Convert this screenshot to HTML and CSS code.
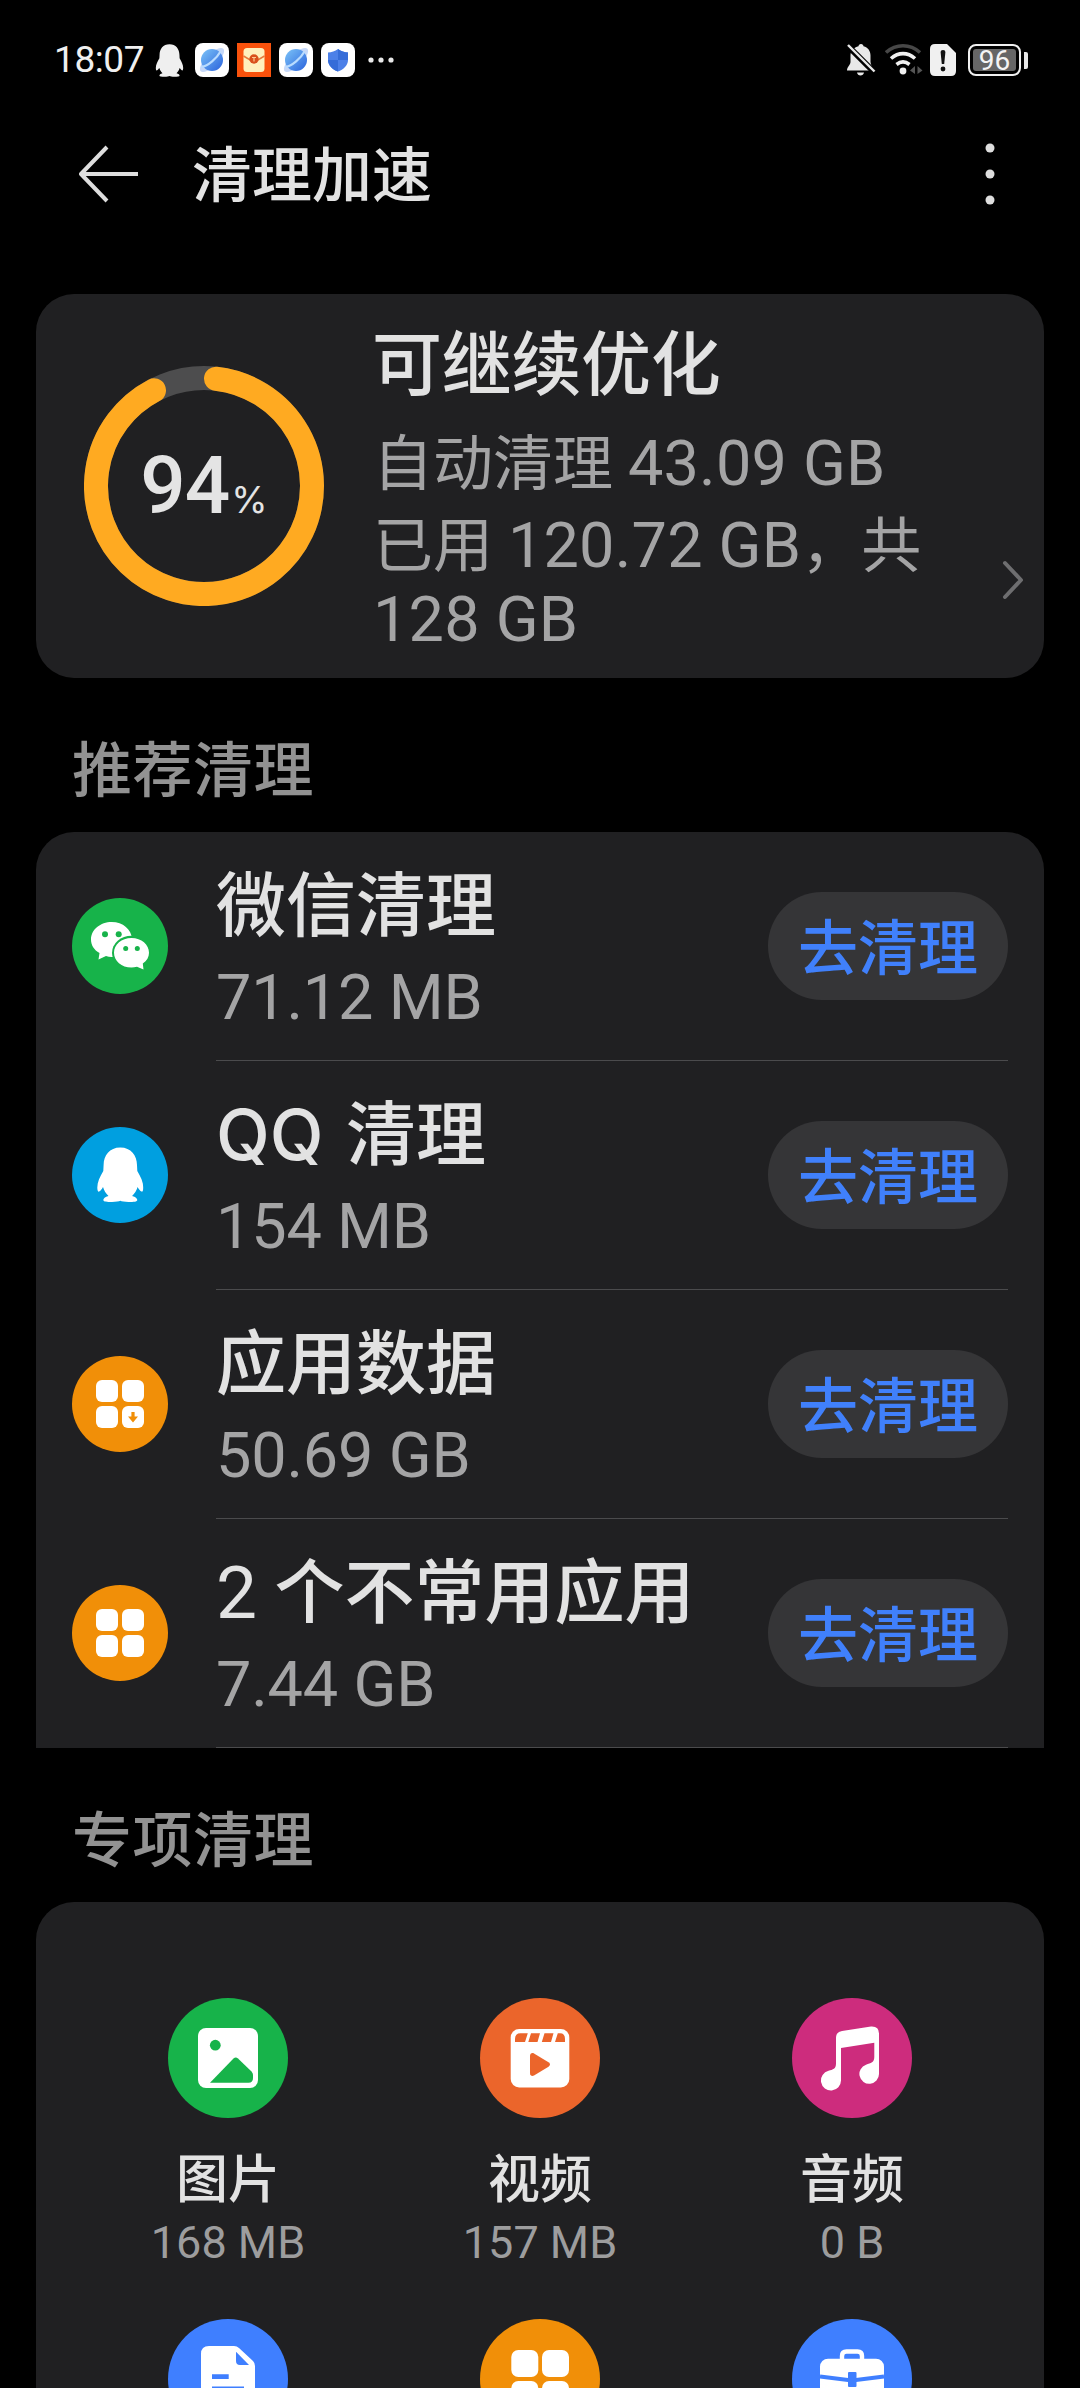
FILE: index.html
```html
<!DOCTYPE html>
<html lang="zh-CN">
<head>
<meta charset="utf-8">
<title>清理加速</title>
<link rel="stylesheet" href="styles.css">
</head>
<body>
<svg class="defs" width="0" height="0">
  <defs>
    <linearGradient id="planet" x1="0" y1="0" x2="1" y2="1"><stop offset="0" stop-color="#7cc4f8"/><stop offset="1" stop-color="#2a62dc"/></linearGradient>
    <symbol id="penguin" viewBox="25 20 46.600 55.500"><path d="M48.300 20.400C37.500 20.400 31.700 28.500 31.600 38L31.300 44C28 49.500 25.300 55 25.300 60.500C25.300 63.500 26 65 27 64.600C28.500 64 30 62 31 60C32 63.500 34 66.500 36.500 69C33 70 31.300 71.500 31.300 73C31.300 74.800 35 75 40 75C44 75 47 74.400 48.300 73.800C49.600 74.400 52.600 75 56.600 75C61.600 75 65.300 74.800 65.300 73C65.300 71.500 63.600 70 60.100 69C62.600 66.500 64.600 63.500 65.600 60C66.600 62 68.100 64 69.600 64.600C70.600 65 71.300 63.500 71.300 60.500C71.300 55 68.600 49.500 65.300 44L65 38C64.900 28.500 59.100 20.400 48.300 20.400Z" fill="currentColor"/></symbol>
    <symbol id="browser" viewBox="0 0 34 34"><rect width="34" height="34" rx="8" fill="#fff"/><ellipse cx="17" cy="17" rx="16" ry="6" transform="rotate(-45 17 17)" fill="#c6d8f8"/><circle cx="17" cy="17" r="11" fill="url(#planet)"/><path d="M6.500 24C13 23 22 15 25.500 8.500" fill="none" stroke="#b9dcff" stroke-width="2.200"/></symbol>
  </defs>
</svg>

<header class="status">
  <div class="status-left">
    <span class="clock">18:07</span>
    <svg class="st-qq" width="29" height="33"><use href="#penguin"/></svg>
    <svg class="st-app" width="34" height="34"><use href="#browser"/></svg>
    <svg class="st-app" width="34" height="34" viewBox="0 0 34 34"><rect width="34" height="34" fill="#f9520c"/><rect x="6.500" y="5" width="21" height="24" rx="3.500" fill="#fff0bd"/><path d="M6.500 13L14 17.500H20L27.500 13" fill="none" stroke="#e67a3c" stroke-width="1.500"/><circle cx="17" cy="16" r="4.700" fill="#d9501c"/><path d="M15 14.500H19M17 14.500V18.500" stroke="#ffc890" stroke-width="1.200"/></svg>
    <svg class="st-app" width="34" height="34"><use href="#browser"/></svg>
    <svg class="st-app" width="34" height="34" viewBox="0 0 34 34"><rect width="34" height="34" rx="8" fill="#fff"/><path d="M17 6C20 8.200 23.500 9.300 27 9.600V17C27 22.500 22.500 26.500 17 28.500C11.500 26.500 7 22.500 7 17V9.600C10.500 9.300 14 8.200 17 6Z" fill="#4c80e8"/><path d="M17 6C20 8.200 23.500 9.300 27 9.600V17H17ZM17 17V28.500C11.500 26.500 7 22.500 7 17Z" fill="#356cd8"/></svg>
    <svg class="st-more" width="26" height="6" viewBox="0 0 26 6"><g fill="#e8e8e8"><circle cx="3" cy="3" r="2.600"/><circle cx="13" cy="3" r="2.600"/><circle cx="23" cy="3" r="2.600"/></g></svg>
  </div>
  <div class="status-right">
    <svg width="30" height="34" viewBox="0 0 30 34"><path d="M15 1C16.500 1 17.500 2 17.500 3.300C22 4.500 24.500 8 24.500 12.500V19C24.500 22 27 24 27 27.500H1C1 24 4.500 22 4.500 19V12.500C4.500 8 8 4.500 12.500 3.300C12.500 2 13.500 1 15 1ZM11 29.500H18C17.500 33.500 11.500 33.500 11 29.500Z" fill="#e8e8e8"/><path d="M2 3L29 30" stroke="#000" stroke-width="6"/><path d="M2 2L28.500 28.500" stroke="#e8e8e8" stroke-width="2.400"/></svg>
    <svg class="wifi" width="38" height="34" viewBox="0 0 38 34"><g fill="none" stroke-width="3.600"><path d="M1 9.500C11 .5 25 .5 35 9.500" stroke="#474747"/><path d="M6 15.500C13.500 9 22.500 9 30 15.500" stroke="#f0f0f0"/><path d="M11.500 21.500C16 18 20 18 24.500 21.500" stroke="#f0f0f0"/></g><circle cx="18" cy="28" r="3.400" fill="#f0f0f0"/><path d="M30 23V31L25 27.500ZM32.500 23V31L37.500 27.500Z" fill="#555"/></svg>
    <svg class="sim" width="26" height="32" viewBox="0 0 26 32"><path d="M5 0H17L26 9V27Q26 32 21 32H5Q0 32 0 27V5Q0 0 5 0Z" fill="#f0f0f0"/><path d="M10.600 8Q10.600 6 13 6Q15.400 6 15.400 8L14.200 20H11.800Z" fill="#111"/><circle cx="13" cy="25" r="2.400" fill="#111"/></svg>
    <div class="battery"><span class="level">96</span></div><i class="nub"></i>
  </div>
</header>

<nav class="bar">
  <svg class="back" width="60" height="58" viewBox="0 0 60 58"><path d="M28 2L2 29L28 56M2 29H59" fill="none" stroke="#dedede" stroke-width="4" stroke-linejoin="round"/></svg>
  <h1>清理加速</h1>
  <svg class="menu" width="10" height="62" viewBox="0 0 10 62"><g fill="#dedede"><circle cx="5" cy="5" r="4.500"/><circle cx="5" cy="31" r="4.500"/><circle cx="5" cy="57" r="4.500"/></g></svg>
</nav>

<main>
  <section class="card summary">
    <div class="ring">
      <svg width="240" height="240" viewBox="0 0 240 240"><circle cx="120" cy="120" r="108" fill="none" stroke="#4d4d4e" stroke-width="24"/><path d="M132 12.700A108 108 0 1 1 70 24.300" fill="none" stroke="#ffaa21" stroke-width="24" stroke-linecap="round"/></svg>
      <div class="pct"><b>94</b><small>%</small></div>
    </div>
    <div class="info">
      <h2>可继续优化</h2>
      <p class="auto">自动清理 <span class="num">43.09 GB</span></p>
      <p class="used">已用 <span class="num">120.72 GB</span>，共<br><span class="num">128 GB</span></p>
    </div>
    <svg class="chev" width="22" height="40" viewBox="0 0 22 40"><path d="M3 3L19 20L3 37" fill="none" stroke="#6e6e70" stroke-width="4" stroke-linecap="round" stroke-linejoin="round"/></svg>
  </section>

  <h3>推荐清理</h3>
  <section class="card list">
    <div class="row">
      <svg class="ic" viewBox="0 0 96 96"><circle cx="48" cy="48" r="48" fill="#17b34a"/><path d="M39.700 24C51 24 59.500 31.500 60 41C60 51.500 51 59 39.700 59Q36.500 59 34 58L26.500 61.500L27.500 55C22 52 19 47 19 41.500C19 31.500 28.500 24 39.700 24Z" fill="#fff"/><ellipse cx="59.500" cy="54.700" rx="19.500" ry="17" fill="#17b34a"/><path d="M59.500 40C69.500 40 77 46.500 77 54.700C77 59 75 62.500 70.800 65.500L71.500 71.500L65 68.700Q62 69.500 59.500 69.500C49.500 69.500 42 63 42 54.700C42 46.500 49.500 40 59.500 40Z" fill="#fff"/><g fill="#17b34a"><circle cx="33" cy="36.300" r="3"/><circle cx="46.700" cy="36.300" r="3"/><circle cx="53.700" cy="50.500" r="2.500"/><circle cx="65.300" cy="50.500" r="2.500"/></g></svg>
      <div class="cell"><div class="txt"><strong>微信清理</strong><span class="num">71.12 MB</span></div><button>去清理</button></div>
    </div>
    <div class="row">
      <svg class="ic" viewBox="0 0 96 96"><circle cx="48" cy="48" r="48" fill="#009fe0"/><use class="white" href="#penguin" x="25" y="20" width="46.600" height="55.500"/></svg>
      <div class="cell"><div class="txt"><strong><span class="qq">QQ</span> 清理</strong><span class="num">154 MB</span></div><button>去清理</button></div>
    </div>
    <div class="row">
      <svg class="ic" viewBox="0 0 96 96"><circle cx="48" cy="48" r="48" fill="#f18f08"/><g fill="#fff"><rect x="24" y="24" width="22" height="22" rx="6"/><rect x="50" y="24" width="22" height="22" rx="6"/><rect x="24" y="50" width="22" height="22" rx="6"/><rect x="50" y="50" width="22" height="22" rx="6"/></g><path d="M59.400 56H62.600V60.500H66L61 66.500L56 60.500H59.400Z" fill="#f18f08"/></svg>
      <div class="cell"><div class="txt"><strong>应用数据</strong><span class="num">50.69 GB</span></div><button>去清理</button></div>
    </div>
    <div class="row">
      <svg class="ic" viewBox="0 0 96 96"><circle cx="48" cy="48" r="48" fill="#f18f08"/><g fill="#fff"><rect x="24" y="24" width="22" height="22" rx="6"/><rect x="50" y="24" width="22" height="22" rx="6"/><rect x="24" y="50" width="22" height="22" rx="6"/><rect x="50" y="50" width="22" height="22" rx="6"/></g></svg>
      <div class="cell"><div class="txt"><strong><span class="two">2</span> 个不常用应用</strong><span class="num">7.44 GB</span></div><button>去清理</button></div>
    </div>
  </section>

  <h3>专项清理</h3>
  <section class="card grid">
    <div class="tile">
      <svg viewBox="0 0 120 120"><circle cx="60" cy="60" r="60" fill="#17b34a"/><rect x="30" y="30" width="60" height="60" rx="8" fill="#fff"/><circle cx="47.300" cy="47.200" r="5.400" fill="#17b34a"/><path d="M42 84.700L65.500 60.500Q67.700 58.300 70 60.500L83.500 73.500Q85 75 85 77V80Q85 84.700 80.500 84.700Z" fill="#17b34a"/></svg>
      <strong>图片</strong><span>168 MB</span>
    </div>
    <div class="tile">
      <svg viewBox="0 0 120 120"><circle cx="60" cy="60" r="60" fill="#eb652b"/><rect x="30.700" y="31" width="58.600" height="58.400" rx="8.500" fill="#fff"/><path d="M40.500 35.300H47.800L45 44H35V41Q35 35.300 40.500 35.300ZM51 35.300H60L57.500 44H48.300ZM64.500 35.300H73.500L71 44H61.800ZM77.800 35.300H80Q85 35.300 85 41V44H75Z" fill="#eb652b"/><path d="M50 58C50 55.500 52 54.300 54 55.500L68.500 64.300Q71.500 66.500 68.500 68.700L54 77.500C52 78.700 50 77.500 50 75Z" fill="#eb652b"/></svg>
      <strong>视频</strong><span>157 MB</span>
    </div>
    <div class="tile">
      <svg viewBox="0 0 120 120"><circle cx="60" cy="60" r="60" fill="#cd2c7d"/><path d="M44 40Q44 34 50 33L79 28.500Q87 28 87 35.500V76A9.800 9.800 0 1 1 74 66.700C79 65 82.300 64.500 82.300 59V44.700L49 50V82.500A10 10 0 1 1 36.500 72.800C41 71.500 44 71 44 65.500Z" fill="#fff"/></svg>
      <strong>音频</strong><span>0 B</span>
    </div>
    <div class="tile">
      <svg viewBox="0 0 120 120"><circle cx="60" cy="60" r="60" fill="#3f7fff"/><path d="M41 27H66Q69 27 71 29L85 42Q87 44 87 47V86Q87 93 80 93H41Q33 93 33 86V35Q33 27 41 27Z" fill="#fff"/><path d="M68 32.700L81 46H72Q68 46 68 42ZM44 55.300H60.700V60H44ZM44 67.500H76V72H44Z" fill="#3f7fff"/></svg>
    </div>
    <div class="tile">
      <svg viewBox="0 0 120 120"><circle cx="60" cy="60" r="60" fill="#f18f08"/><g fill="#fff"><rect x="31.300" y="31" width="27" height="27" rx="7"/><rect x="62" y="31" width="27" height="27" rx="7"/><rect x="31.300" y="62" width="27" height="27" rx="7"/><rect x="62" y="62" width="27" height="27" rx="7"/></g></svg>
    </div>
    <div class="tile">
      <svg viewBox="0 0 120 120"><circle cx="60" cy="60" r="60" fill="#3f7fff"/><path d="M50 41V37Q50 32.500 54.500 32.500H65.500Q70 32.500 70 37V41" fill="none" stroke="#fff" stroke-width="4.400"/><rect x="28" y="39.700" width="64" height="50" rx="8" fill="#fff"/><path d="M28 57.500L56 61H64L92 57.500" fill="none" stroke="#3f7fff" stroke-width="4"/><rect x="56" y="53" width="8.500" height="15" rx="1" fill="#3f7fff"/></svg>
    </div>
  </section>
</main>
</body>
</html>
```
FILE: styles.css
```css
* { box-sizing: border-box; margin: 0; padding: 0; }
body {
  width: 1080px;
  height: 2388px;
  overflow: hidden;
  background: #000;
  color: #e2e2e2;
  font-family: Roboto, "Noto Sans CJK SC", sans-serif;
}
.defs { position: absolute; }
svg { display: block; flex: none; }

.status {
  display: flex;
  justify-content: space-between;
  align-items: center;
  height: 120px;
  padding: 0 52px 0 54px;
}
.status-left, .status-right { display: flex; align-items: center; }
.clock { width: 101px; font-size: 37px; line-height: 40px; letter-spacing: -0.4px; color: #f0f0f0; }
.st-qq { color: #efefef; margin-right: 11px; }
.st-app { margin-right: 8px; }
.st-more { margin-left: 5px; }
.wifi { margin-left: 9px; }
.sim { margin-left: 7px; }
.battery {
  width: 53px;
  height: 32px;
  margin-left: 12px;
  padding: 3px;
  border: 2px solid #f0f0f0;
  border-radius: 8px;
}
.level {
  display: block;
  height: 22px;
  background: #666;
  border-radius: 3px;
  color: #f4f4f4;
  font-size: 28px;
  line-height: 23px;
  text-align: center;
}
.nub { width: 4px; height: 17px; margin-left: 3px; background: #e8e8e8; border-radius: 0 2px 2px 0; }

.bar { display: flex; align-items: center; height: 108px; padding: 0 85px 0 79px; }
.bar h1 { margin-left: 53px; padding-top: 6px; font-size: 60px; line-height: 80px; font-weight: 500; }
.menu { margin-left: auto; }

main { height: 2160px; padding: 66px 36px 0; overflow: hidden; }
.card { background: #202022; border-radius: 38px; }

.summary { display: flex; align-items: center; height: 384px; padding: 0 20px 0 48px; }
.ring { display: grid; place-items: center; width: 240px; height: 240px; }
.ring > * { grid-area: 1 / 1; }
.pct { display: flex; align-items: baseline; gap: 2px; color: #e4e4e4; }
.pct b { font-size: 80px; font-weight: 500; letter-spacing: -1px; }
.pct small { font: 400 37px Inter, sans-serif; }
.info { align-self: flex-start; margin-left: 49px; padding-top: 31px; white-space: nowrap; }
.info h2 { margin-left: -1px; font-size: 70px; line-height: 82px; font-weight: 500; letter-spacing: -0.3px; }
.info p { font-size: 60px; line-height: 73px; color: #a4a4a5; }
.info .auto { margin-top: 20px; }
.info .used { margin-top: 8px; }
.info .num { letter-spacing: 0.2px; }
.num { font-size: 63px; letter-spacing: -0.2px; color: #a4a4a5; }
.chev { align-self: flex-start; margin: 266px 0 0 auto; }

h3 { height: 154px; padding: 54px 0 0 36px; font-size: 60px; line-height: 80px; font-weight: 500; letter-spacing: 0.5px; color: #929292; }

.list { border-radius: 38px 38px 0 0; }
.row { display: flex; height: 229px; padding: 0 36px; }
.ic { width: 96px; height: 96px; margin-top: 66px; }
.white { color: #fff; }
.cell {
  display: flex;
  flex: 1;
  justify-content: space-between;
  margin-left: 48px;
  border-bottom: 1px solid #4b4b4d;
}
.txt { display: flex; flex-direction: column; padding-top: 34px; white-space: nowrap; }
.txt strong { font-size: 70px; line-height: 82px; font-weight: 500; }
.txt .num { margin-top: 13px; line-height: 73px; }
.qq { margin-right: 5px; font-family: Inter, sans-serif; line-height: 1; }
.two { font-size: 73px; font-weight: 400; line-height: 1; }
button {
  width: 240px;
  height: 108px;
  margin-top: 60px;
  padding-top: 7px;
  border: 0;
  border-radius: 54px;
  background: #353537;
  color: #4080fb;
  font: 500 60px/101px Roboto, "Noto Sans CJK SC", sans-serif;
}

.grid {
  display: grid;
  grid-template-columns: repeat(3, 312px);
  grid-auto-rows: 321px;
  height: 486px;
  padding: 96px 36px 0;
  border-radius: 38px 38px 0 0;
  overflow: hidden;
}
.tile { display: flex; flex-direction: column; align-items: center; }
.tile svg { width: 120px; height: 120px; }
.tile strong { margin-top: 29px; font-size: 52px; line-height: 68px; font-weight: 500; }
.tile span { font-size: 45px; line-height: 56px; color: #9d9d9e; }
```
